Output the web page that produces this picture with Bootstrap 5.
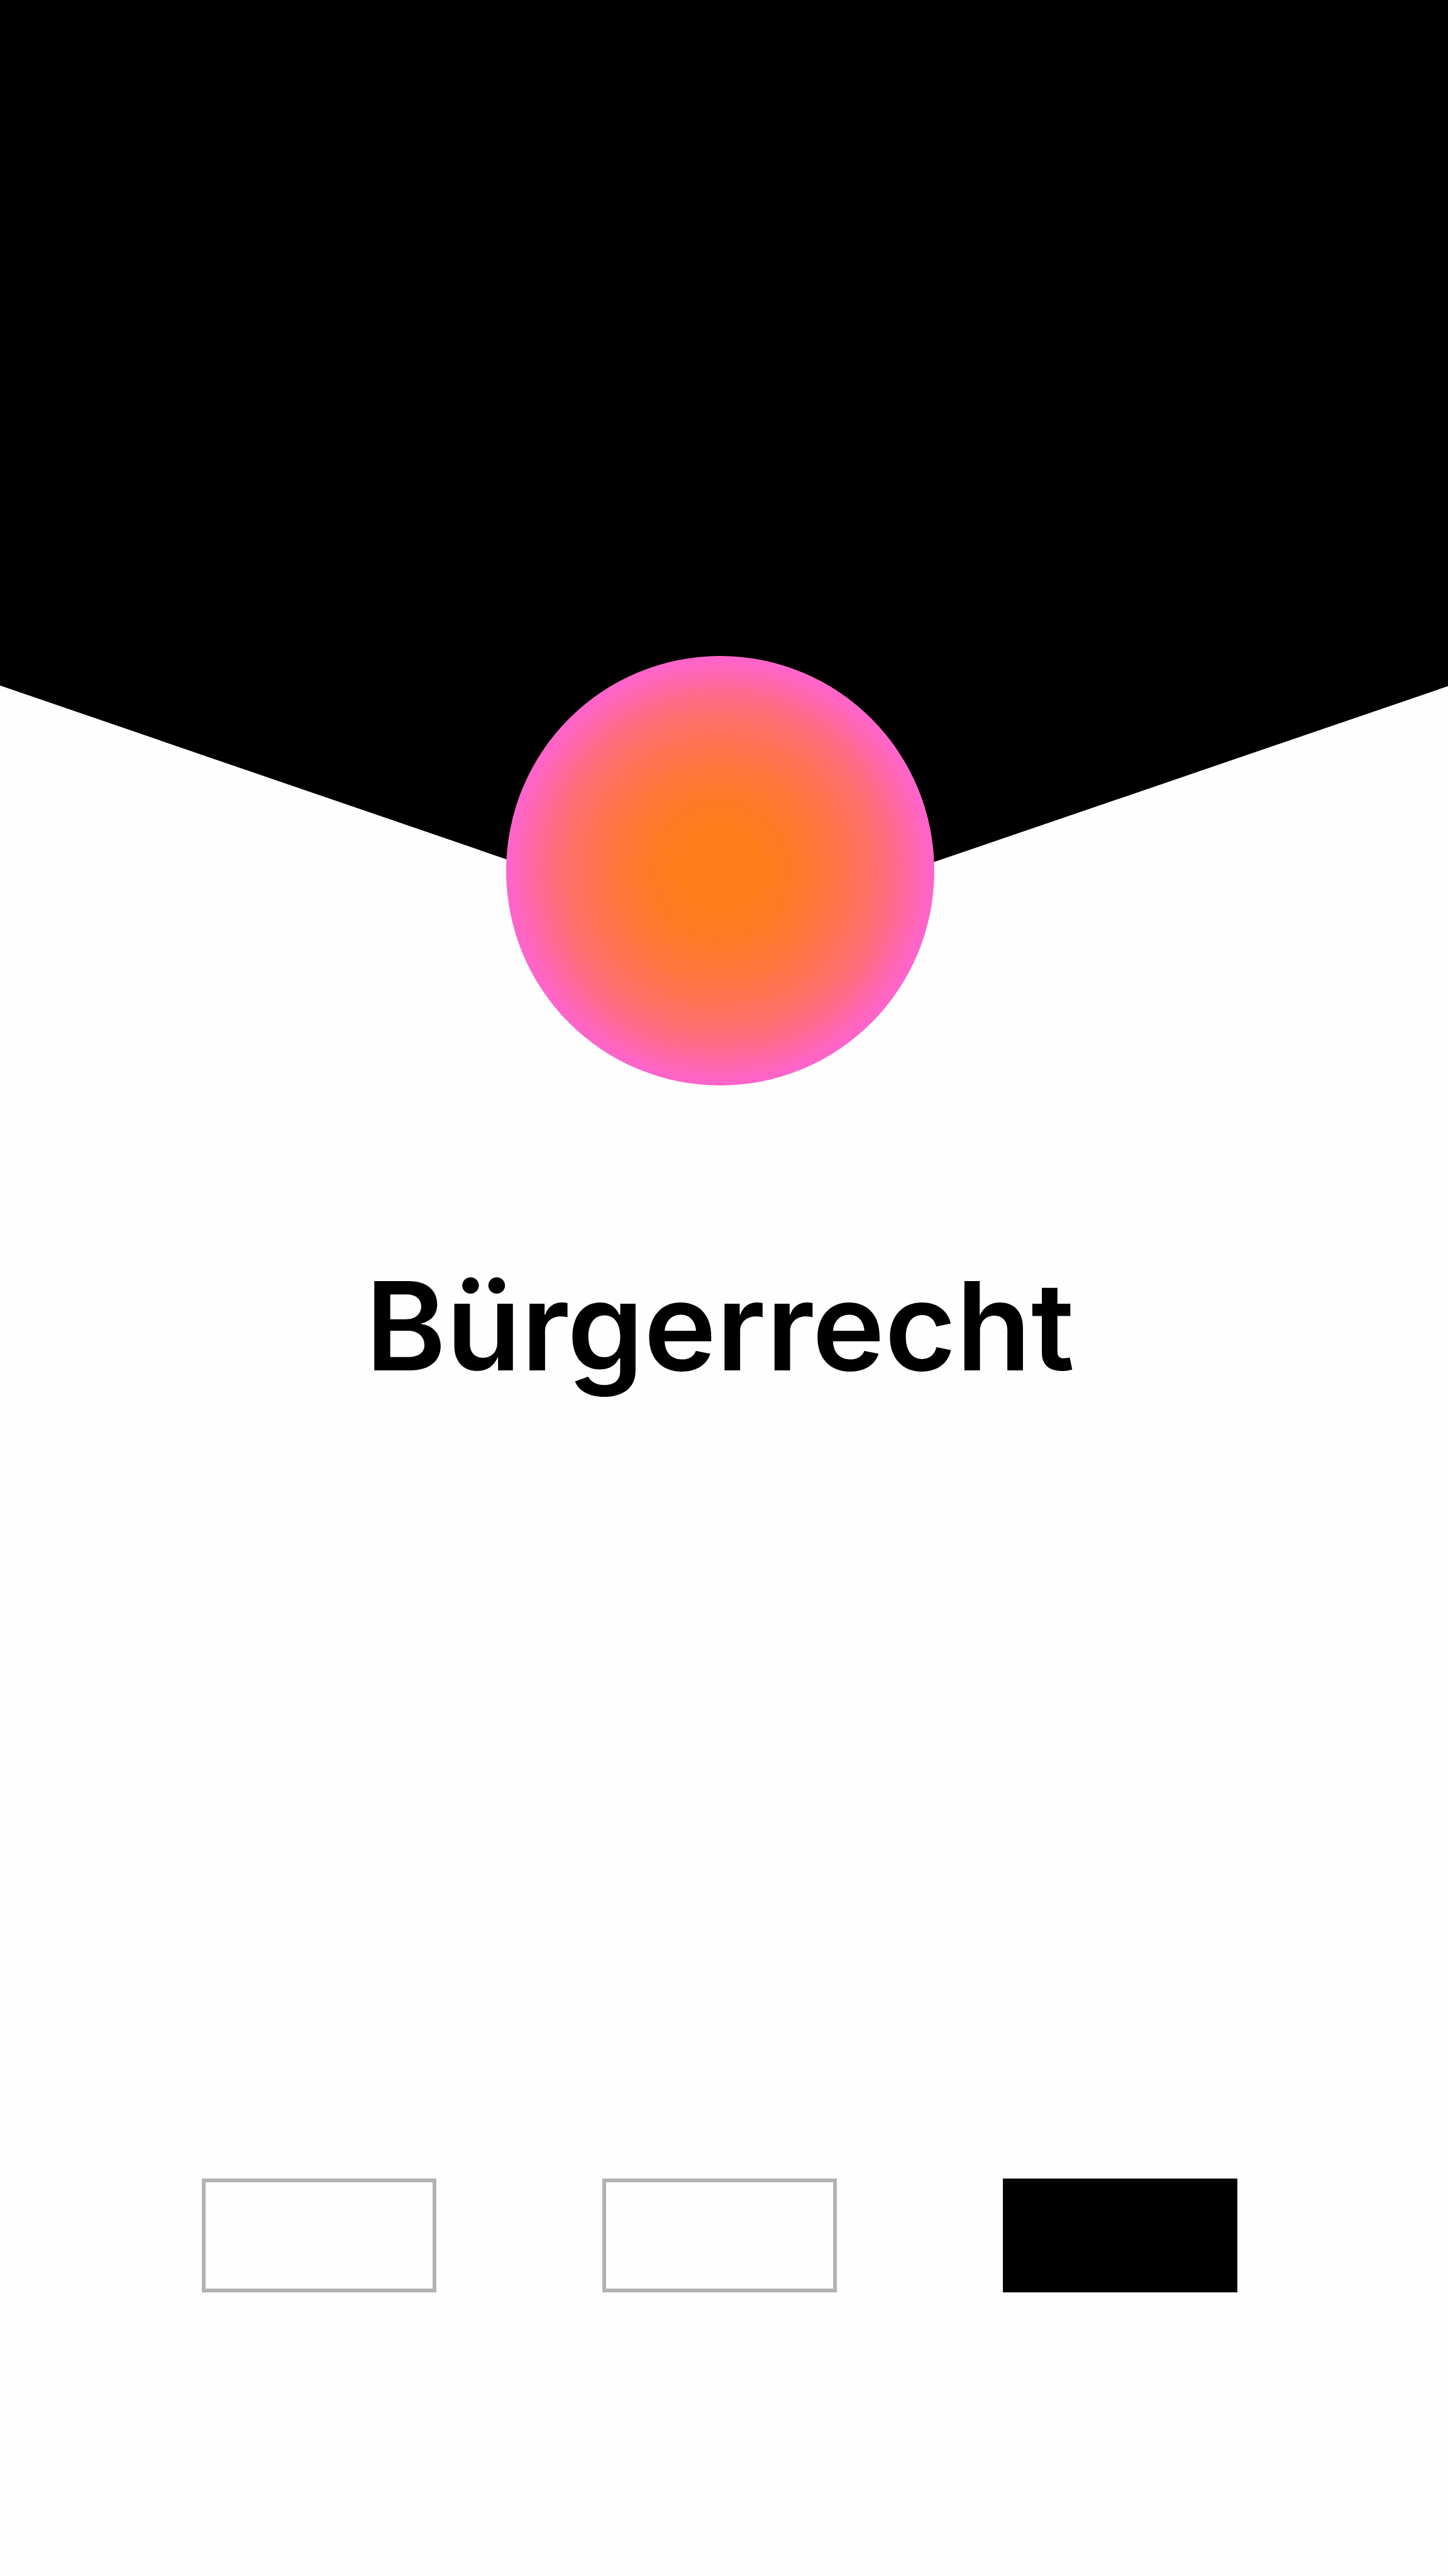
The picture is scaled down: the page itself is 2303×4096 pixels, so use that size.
<!DOCTYPE html>
<html lang="de">
<head>
<meta charset="utf-8">
<meta name="viewport" content="width=device-width, initial-scale=1">
<title>Bürgerrecht</title>
<link href="https://cdn.jsdelivr.net/npm/bootstrap@5.3.0/dist/css/bootstrap.min.css" rel="stylesheet">
<style>
  body { background: #fefefe; color: #000; font-family: Inter, "Liberation Sans", sans-serif; }
  .envelope-flap { height: 1485px; background: #000; clip-path: polygon(0 0, 100% 0, 100% 1091px, 50% 100%, 0 1090px); }
  .stage { padding-right: 13px; }
  .seal {
    width: 681px; height: 683px; margin-top: -442px;
    background: radial-gradient(closest-side, #ff7c18 0%, #ff7c19 18%, #ff7926 33%, #ff763b 48%, #ff7354 61%, #ff6f6c 72%, #ff6b8a 82%, #ff67aa 90%, #ff64c8 98%);
  }
  .topic { margin-top: 269px; font-size: 195px; line-height: 226px; font-weight: 600; }
  .steps { margin-top: 1243px; padding: 0 335px 0 321px; }
  .step { width: 373px; height: 181px; border: 6px solid #b2b2b2; background: transparent; }
  .step[aria-current] { background: #000; border-color: #000; }
</style>
</head>
<body>
<main class="d-flex flex-column">
  <div class="envelope-flap w-100"></div>
  <section class="stage d-flex flex-column align-items-center">
    <div class="seal rounded-circle position-relative"></div>
    <h1 class="topic mb-0 text-center">Bürgerrecht</h1>
  </section>
  <nav class="steps d-flex justify-content-between" aria-label="Schritte">
    <button type="button" class="step p-0 rounded-0" aria-label="Schritt 1"></button>
    <button type="button" class="step p-0 rounded-0" aria-label="Schritt 2"></button>
    <button type="button" class="step p-0 rounded-0" aria-label="Schritt 3" aria-current="step"></button>
  </nav>
</main>
<script src="https://cdn.jsdelivr.net/npm/bootstrap@5.3.0/dist/js/bootstrap.bundle.min.js"></script>
</body>
</html>
